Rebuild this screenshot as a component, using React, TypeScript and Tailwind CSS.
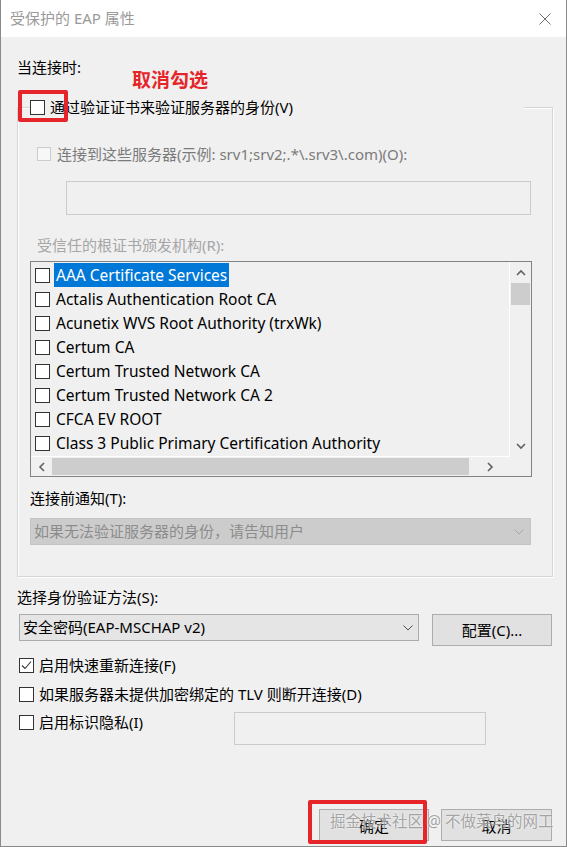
import React from "react";

const FONT = "font-[family-name:'Segoe_UI','Noto_Sans','Noto_Sans_CJK_SC',sans-serif]";

function CheckBox({ checked = false, disabled = false }: { checked?: boolean; disabled?: boolean }) {
  return (
    <span
      className={
        disabled
          ? "w-[14px] h-[14px] shrink-0 border border-[#cccccc] bg-[#f7f7f7] flex items-center justify-center"
          : "w-[15px] h-[15px] shrink-0 border border-[#333333] bg-white flex items-center justify-center"
      }
    >
      {checked && (
        <svg width="11" height="11" viewBox="0 0 11 11">
          <path d="M1 5.5L4 8.5L10 1.5" fill="none" stroke="#333333" strokeWidth="1.1" />
        </svg>
      )}
    </span>
  );
}

function Chevron({ dir, color = "#606060" }: { dir: "up" | "down" | "left" | "right"; color?: string }) {
  const d =
    dir === "up"
      ? "M1 6L5 2L9 6"
      : dir === "down"
      ? "M1 2L5 6L9 2"
      : dir === "left"
      ? "M6 1L2 5L6 9"
      : "M2 1L6 5L2 9";
  const w = dir === "up" || dir === "down" ? 10 : 8;
  const h = dir === "up" || dir === "down" ? 8 : 10;
  return (
    <svg width={w} height={h} viewBox={`0 0 ${w} ${h}`}>
      <path d={d} fill="none" stroke={color} strokeWidth="1.6" />
    </svg>
  );
}

const certs = [
  "AAA Certificate Services",
  "Actalis Authentication Root CA",
  "Acunetix WVS Root Authority (trxWk)",
  "Certum CA",
  "Certum Trusted Network CA",
  "Certum Trusted Network CA 2",
  "CFCA EV ROOT",
  "Class 3 Public Primary Certification Authority",
];

function CertList() {
  return (
    <div className="ml-[12px] mt-[6px] w-[502px] h-[216px] border border-[#828282] bg-[#f0f0f0] grid grid-cols-[1fr_21px] grid-rows-[1fr_19px]">
      <div className="pt-[1px] pl-[4px] overflow-hidden border-r border-b border-white text-[15.5px]">
        {certs.map((c, i) => (
          <div key={c} className="h-[24px] flex items-center">
            <CheckBox />
            <span
              className={
                i === 0
                  ? "ml-[4px] h-[24px] leading-[24px] px-[2px] bg-[#0078d7] text-white whitespace-nowrap"
                  : "ml-[4px] h-[24px] leading-[24px] px-[2px] whitespace-nowrap"
              }
            >
              {c}
            </span>
          </div>
        ))}
      </div>
      <div className="flex flex-col items-center">
        <div className="h-[21px] flex items-center justify-center">
          <Chevron dir="up" />
        </div>
        <div className="w-[19px] h-[22px] bg-[#cdcdcd]" />
        <div className="flex-1" />
        <div className="h-[22px] flex items-center justify-center">
          <Chevron dir="down" />
        </div>
      </div>
      <div className="flex items-center">
        <div className="w-[21px] flex justify-center">
          <Chevron dir="left" />
        </div>
        <div className="w-[417px] h-[17px] bg-[#cdcdcd]" />
        <div className="flex-1 flex justify-center">
          <Chevron dir="right" />
        </div>
      </div>
      <div />
    </div>
  );
}

export default function App() {
  return (
    <div
      className={`relative w-[567px] h-[847px] overflow-hidden bg-[#f0f0f0] border-x border-b border-[#8a8a8a] flex flex-col text-[15px] text-black ${FONT}`}
    >
      {/* title bar */}
      <div className="h-[37px] shrink-0 bg-white flex items-center justify-between pl-[9px] pr-[15px]">
        <span className="text-[#9a9a9a] leading-none">受保护的 EAP 属性</span>
        <svg width="12" height="12" viewBox="0 0 12 12">
          <path d="M0.5 0.5L11.5 11.5M11.5 0.5L0.5 11.5" stroke="#6e6e6e" strokeWidth="1" />
        </svg>
      </div>

      <div className="flex flex-col items-start pl-[16px] pt-[20px]">
        <div className="h-[20px] leading-[20px]">当连接时:</div>

        <fieldset className="mt-[20px] w-[536px] min-w-0 border border-[#d5d5d5] shadow-[inset_1px_1px_0_#ffffff,1px_1px_0_#ffffff] pb-[31px] flex flex-col items-start">
          <legend className="ml-[12px] w-[494px] h-[20px] bg-[#f0f0f0]">
            <div className="h-[20px] flex items-center gap-[5px]">
              <CheckBox />
              <span className="leading-[20px]">通过验证证书来验证服务器的身份(V)</span>
            </div>
          </legend>

          <div className="mt-[27px] ml-[19px] h-[20px] flex items-center gap-[6px]">
            <CheckBox disabled />
            <span className="leading-[20px] text-[#7b7b7b] whitespace-nowrap">
              连接到这些服务器(示例: srv1;srv2;.*\.srv3\.com)(O):
            </span>
          </div>

          <div className="mt-[17px] ml-[48px] w-[465px] h-[34px] border border-[#cbcbcb] bg-[#f0f0f0]" />

          <div className="mt-[20px] ml-[19px] h-[20px] leading-[20px] text-[#a6a6a6]">受信任的根证书颁发机构(R):</div>

          <CertList />

          <div className="mt-[11px] ml-[12px] h-[20px] leading-[20px]">连接前通知(T):</div>

          <div className="mt-[10px] ml-[12px] w-[501px] h-[27px] border border-[#c4c4c4] bg-[#cccccc] flex items-center justify-between pl-[3px] pr-[6px]">
            <span className="text-[#8c8c8c] leading-none">如果无法验证服务器的身份，请告知用户</span>
            <svg width="10" height="6" viewBox="0 0 10 6">
              <path d="M0.5 0.5L5 5L9.5 0.5" fill="none" stroke="#a8a8a8" strokeWidth="1" />
            </svg>
          </div>
        </fieldset>

        <div className="mt-[10px] h-[20px] leading-[20px]">选择身份验证方法(S):</div>

        <div className="mt-[7px] ml-[2px] flex items-start gap-[13px]">
          <div className="w-[400px] h-[27px] border border-[#acacac] bg-[#e5e5e5] flex items-center justify-between pl-[3px] pr-[5px]">
            <span className="leading-none">安全密码(EAP-MSCHAP v2)</span>
            <svg width="10" height="6" viewBox="0 0 10 6">
              <path d="M0.5 0.5L5 5L9.5 0.5" fill="none" stroke="#505050" strokeWidth="1" />
            </svg>
          </div>
          <div className="w-[120px] h-[32px] border border-[#adadad] bg-[#e1e1e1] flex items-center justify-center">
            配置(C)...
          </div>
        </div>

        <div className="mt-[9px] ml-[2px] h-[20px] flex items-center gap-[5px]">
          <CheckBox checked />
          <span className="leading-[20px]">启用快速重新连接(F)</span>
        </div>

        <div className="mt-[9px] ml-[2px] h-[20px] flex items-center gap-[5px]">
          <CheckBox />
          <span className="leading-[20px]">如果服务器未提供加密绑定的 TLV 则断开连接(D)</span>
        </div>

        <div className="mt-[8px] ml-[2px] flex items-start">
          <div className="w-[215px] h-[20px] flex items-center gap-[5px]">
            <CheckBox />
            <span className="leading-[20px]">启用标识隐私(I)</span>
          </div>
          <div className="w-[252px] h-[33px] border border-[#cbcbcb] bg-[#f0f0f0]" />
        </div>
      </div>

      <div className="mt-[64px] flex justify-end gap-[12px] pr-[14px]">
        <div className="w-[110px] h-[32px] border border-[#adadad] bg-[#e1e1e1] flex items-center justify-center pt-[3px]">
          确定
        </div>
        <div className="w-[111px] h-[32px] border border-[#adadad] bg-[#e1e1e1] flex items-center justify-center pt-[3px]">
          取消
        </div>
      </div>

      {/* markup drawn over the dialog */}
      <div className="absolute left-[17px] top-[90px] w-[50px] h-[32px] border-[4px] border-[#e5252a] rounded-[2px]" />
      <div className="absolute left-[131px] top-[68px] text-[19px] leading-[24px] font-bold text-[#e5252a]">取消勾选</div>
      <div className="absolute left-[307px] top-[800px] w-[119px] h-[44px] border-[4px] border-[#e5252a] rounded-[2px]" />
      <div className="absolute left-[329px] top-[810px] text-[15.5px] leading-[22px] text-[#8e8e8e]/80 whitespace-nowrap [text-shadow:0_0_2px_#ffffff]">
        掘金技术社区 @ 不做菜鸟的网工
      </div>
    </div>
  );
}
